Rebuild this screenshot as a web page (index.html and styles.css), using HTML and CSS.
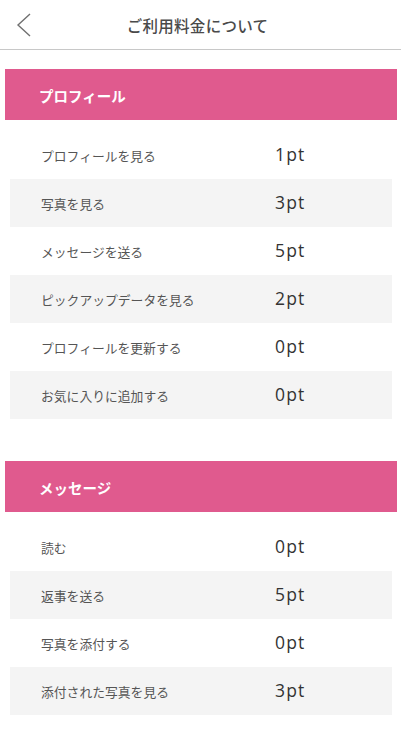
FILE: index.html
```html
<!DOCTYPE html>
<html lang="ja">
<head>
<meta charset="utf-8">
<title>ご利用料金について</title>
<link rel="stylesheet" href="styles.css">
</head>
<body>
<header class="topbar">
  <button class="back" aria-label="戻る">
    <svg width="20" height="30" viewBox="0 0 20 30"><polyline points="14,2 2,13 14,24" fill="none" stroke="#707070" stroke-width="1.4"/></svg>
  </button>
  <h1 class="title">ご利用料金について</h1>
</header>
<main class="content">
  <section class="section">
    <h2 class="section-head">プロフィール</h2>
    <ul class="rows">
      <li class="row"><span class="label">プロフィールを見る</span><span class="value">1pt</span></li>
      <li class="row alt"><span class="label">写真を見る</span><span class="value">3pt</span></li>
      <li class="row"><span class="label">メッセージを送る</span><span class="value">5pt</span></li>
      <li class="row alt"><span class="label">ピックアップデータを見る</span><span class="value">2pt</span></li>
      <li class="row"><span class="label">プロフィールを更新する</span><span class="value">0pt</span></li>
      <li class="row alt"><span class="label">お気に入りに追加する</span><span class="value">0pt</span></li>
    </ul>
  </section>
  <section class="section">
    <h2 class="section-head">メッセージ</h2>
    <ul class="rows">
      <li class="row"><span class="label">読む</span><span class="value">0pt</span></li>
      <li class="row alt"><span class="label">返事を送る</span><span class="value">5pt</span></li>
      <li class="row"><span class="label">写真を添付する</span><span class="value">0pt</span></li>
      <li class="row alt"><span class="label">添付された写真を見る</span><span class="value">3pt</span></li>
    </ul>
  </section>
</main>
</body>
</html>
```
FILE: styles.css
```css
* { box-sizing: border-box; }
html, body { margin: 0; padding: 0; background: #fff; }
body {
  font-family: "Noto Sans CJK JP", "Noto Sans", sans-serif;
  color: #555;
  width: 401px;
}
.topbar {
  position: relative;
  height: 50px;
  border-bottom: 1px solid #c8c8c8;
  display: flex;
  align-items: center;
  justify-content: center;
}
.back {
  position: absolute;
  left: 16px;
  top: 12px;
  padding: 0;
  margin: 0;
  border: 0;
  background: none;
  width: 20px;
  height: 30px;
  display: block;
}
.back svg { display: block; }
.title {
  margin: 0;
  font-size: 15.5px;
  font-weight: 500;
  color: #4a4a4a;
  letter-spacing: 0.3px;
  padding-right: 6px;
}
.content {
  padding: 19px 4px 20px 5px;
}
.section + .section { margin-top: 42px; }
.section-head {
  margin: 0;
  height: 51px;
  background: #e05a8e;
  color: #fff;
  font-size: 14.5px;
  font-weight: 700;
  display: flex;
  align-items: center;
  padding-left: 34px;
  padding-top: 1px;
}
.rows {
  list-style: none;
  margin: 11px 5px 0 5px;
  padding: 0;
}
.row {
  height: 48px;
  display: grid;
  grid-template-columns: 234px auto;
  align-items: center;
  padding-left: 31px;
}
.row.alt { background: #f4f4f4; }
.label {
  font-size: 12.8px;
  color: #555;
}
.value {
  font-family: "Open Sans", "Noto Sans", sans-serif;
  font-size: 17.5px;
  font-weight: 500;
  color: #333;
  letter-spacing: 1.2px;
  line-height: 1;
}
```
